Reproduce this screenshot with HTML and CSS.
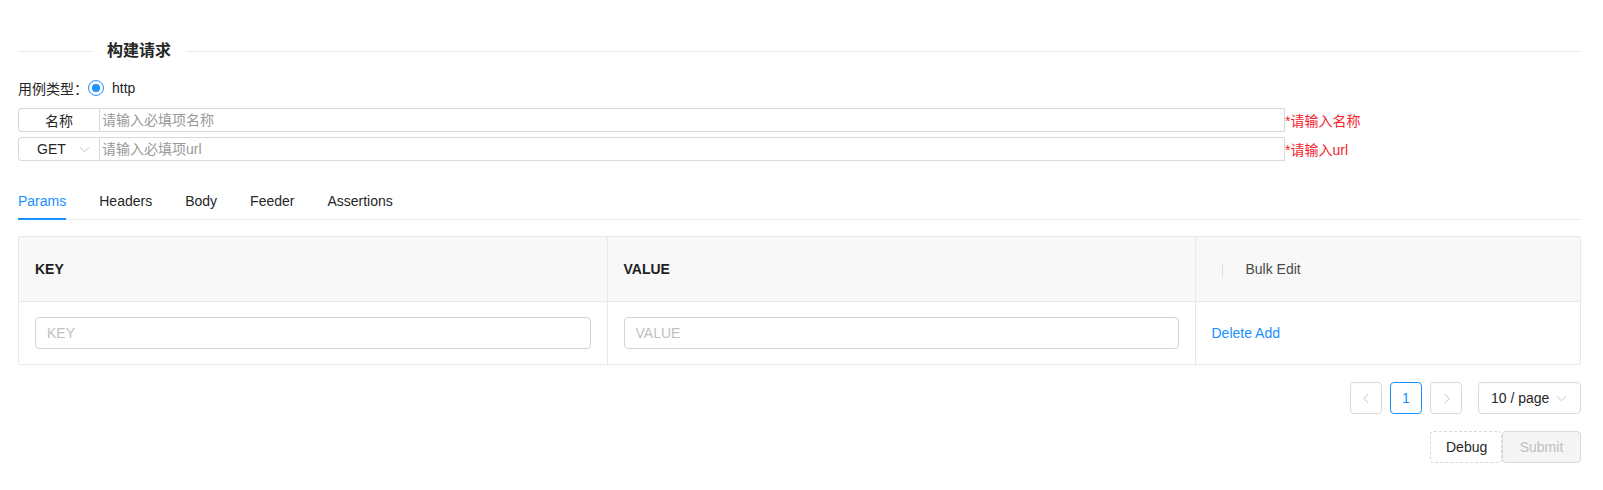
FILE: index.html
```html
<!DOCTYPE html>
<html lang="zh-CN">
<head>
    <meta charset="UTF-8">
    <title>构建请求</title>
    <link rel="stylesheet" href="styles.css">
</head>
<body>
    <div class="page">
        <div class="divider"><span class="divider-text">构建请求</span></div>

        <div class="type-row">
            <span class="type-label">用例类型：</span>
            <label class="radio"><span class="radio-dot"></span><span class="radio-text">http</span></label>
        </div>

        <div class="field-row">
            <div class="input-group">
                <span class="addon">名称</span>
                <input class="group-input" type="text" placeholder="请输入必填项名称">
            </div>
            <span class="error">*请输入名称</span>
        </div>
        <div class="field-row">
            <div class="input-group">
                <span class="addon addon-select">GET
                    <svg class="chev" viewBox="0 0 12 12" width="11" height="11"><path d="M1 3.5 L6 8.5 L11 3.5" fill="none" stroke="#bfbfbf" stroke-width="1"/></svg>
                </span>
                <input class="group-input" type="text" placeholder="请输入必填项url">
            </div>
            <span class="error">*请输入url</span>
        </div>

        <div class="tabs">
            <div class="tab active">Params</div>
            <div class="tab">Headers</div>
            <div class="tab">Body</div>
            <div class="tab">Feeder</div>
            <div class="tab">Assertions</div>
        </div>

        <div class="table-wrap">
            <table class="params">
                <thead>
                    <tr>
                        <th>KEY</th>
                        <th>VALUE</th>
                        <th class="op-head"><span class="sep"></span><span class="bulk">Bulk Edit</span></th>
                    </tr>
                </thead>
                <tbody>
                    <tr>
                        <td><input class="cell-input" type="text" placeholder="KEY"></td>
                        <td><input class="cell-input" type="text" placeholder="VALUE"></td>
                        <td><a class="link">Delete</a> <a class="link">Add</a></td>
                    </tr>
                </tbody>
            </table>
        </div>

        <div class="pagination">
            <span class="page-item disabled">
                <svg viewBox="0 0 12 12" width="11" height="11"><path d="M8 1 L3 6 L8 11" fill="none" stroke="#bfbfbf" stroke-width="1"/></svg>
            </span>
            <span class="page-item current">1</span>
            <span class="page-item disabled">
                <svg viewBox="0 0 12 12" width="11" height="11"><path d="M4 1 L9 6 L4 11" fill="none" stroke="#bfbfbf" stroke-width="1"/></svg>
            </span>
            <span class="size-select">10 / page
                <svg class="chev" viewBox="0 0 12 12" width="11" height="11"><path d="M1 3.5 L6 8.5 L11 3.5" fill="none" stroke="#bfbfbf" stroke-width="1"/></svg>
            </span>
        </div>

        <div class="actions">
            <button class="btn btn-dashed">Debug</button>
            <button class="btn btn-disabled" disabled>Submit</button>
        </div>
    </div>
</body>
</html>
```

FILE: styles.css
```css
*{
    box-sizing: border-box;
}
body{
    margin: 0;
    background: #fff;
    font-family: "Liberation Sans", "Noto Sans CJK SC", sans-serif;
    font-size: 14px;
    color: #262626;
}
.page{
    width: 1563px;
    margin-left: 18px;
    padding-top: 39px;
}
/* 标题分割线 */
.divider{
    display: flex;
    align-items: center;
    height: 24px;
}
.divider::before{
    content: "";
    width: 74px;
    border-top: 1px solid #ebebeb;
}
.divider::after{
    content: "";
    flex: 1;
    border-top: 1px solid #ebebeb;
}
.divider-text{
    padding: 0 15px;
    font-size: 16px;
    font-weight: bold;
    line-height: 24px;
}
/* 用例类型 */
.type-row{
    display: flex;
    align-items: center;
    height: 22px;
    margin-top: 14px;
}
.type-label{
    color: #262626;
}
.radio{
    display: flex;
    align-items: center;
}
.radio-dot{
    position: relative;
    width: 16px;
    height: 16px;
    border: 1px solid #1890ff;
    border-radius: 50%;
}
.radio-dot::after{
    content: "";
    position: absolute;
    top: 3px;
    left: 3px;
    width: 8px;
    height: 8px;
    border-radius: 50%;
    background: #1890ff;
}
.radio-text{
    padding-left: 8px;
}
/* 输入框 */
.field-row{
    display: flex;
    align-items: center;
    margin-top: 9px;
}
.field-row + .field-row{
    margin-top: 5px;
}
.input-group{
    display: flex;
    width: 1267px;
    height: 24px;
}
.addon{
    display: flex;
    align-items: center;
    justify-content: center;
    width: 81px;
    border: 1px solid #d9d9d9;
    border-right: 0;
    border-radius: 4px 0 0 4px;
    background: #fff;
    color: #262626;
}
.addon-select{
    justify-content: flex-start;
    padding-left: 18px;
}
.addon-select .chev{
    margin-left: 13px;
}
.group-input{
    flex: 1;
    height: 24px;
    padding: 0 2px;
    border: 1px solid #d9d9d9;
    border-radius: 0;
    font: inherit;
    color: #262626;
    outline: none;
}
.group-input::placeholder{
    color: #9a9a9a;
}
.error{
    color: #f5222d;
    font-size: 14px;
}
/* 标签页 */
.tabs{
    display: flex;
    margin-top: 21px;
    border-bottom: 1px solid #ebebeb;
}
.tab{
    margin-right: 33px;
    padding: 10px 0 7px;
    line-height: 19px;
    border-bottom: 2px solid transparent;
    margin-bottom: -1px;
    color: #262626;
}
.tab.active{
    color: #1890ff;
    border-bottom-color: #1890ff;
}
/* 参数表 */
.table-wrap{
    margin-top: 16px;
    border: 1px solid #e8e8e8;
    border-radius: 2px;
}
.params{
    width: 100%;
    border-collapse: collapse;
    table-layout: fixed;
}
.params th{
    height: 64px;
    padding: 0 16px;
    background: #f8f8f8;
    text-align: left;
    font-weight: bold;
    color: #1f1f1f;
    border-bottom: 1px solid #e8e8e8;
}
.params th:nth-child(1),
.params th:nth-child(2){
    width: 588px;
}
.params th + th,
.params td + td{
    border-left: 1px solid #e8e8e8;
}
.params .op-head{
    font-weight: normal;
    padding-left: 26px;
}
.sep{
    display: inline-block;
    width: 1px;
    height: 13px;
    background: #e0e0e0;
    vertical-align: middle;
}
.bulk{
    margin-left: 23px;
    color: #4a4a4a;
}
.params td{
    height: 63px;
    padding: 0 16px;
}
.cell-input{
    width: 100%;
    height: 32px;
    padding: 0 11px;
    border: 1px solid #d4d4d4;
    border-radius: 4px;
    font: inherit;
    outline: none;
}
.cell-input::placeholder{
    color: #bfbfbf;
}
.link{
    color: #1890ff;
    cursor: pointer;
}
/* 分页 */
.pagination{
    display: flex;
    justify-content: flex-end;
    align-items: center;
    margin-top: 17px;
}
.page-item{
    display: flex;
    align-items: center;
    justify-content: center;
    width: 32px;
    height: 32px;
    margin-left: 8px;
    border: 1px solid #d9d9d9;
    border-radius: 4px;
    color: #262626;
}
.page-item.current{
    border-color: #1890ff;
    color: #1890ff;
}
.size-select{
    display: flex;
    align-items: center;
    width: 103px;
    height: 32px;
    margin-left: 16px;
    padding-left: 12px;
    border: 1px solid #d9d9d9;
    border-radius: 4px;
    color: #262626;
}
.size-select .chev{
    margin-left: 7px;
}
/* 操作按钮 */
.actions{
    display: flex;
    justify-content: flex-end;
    margin-top: 17px;
}
.btn{
    height: 32px;
    padding: 0 15px;
    font: inherit;
    border-radius: 4px;
    background: #fff;
    color: #262626;
}
.btn-dashed{
    width: 72px;
    border: 1px dashed #d9d9d9;
}
.btn-disabled{
    width: 79px;
    border: 1px solid #d9d9d9;
    background: #f5f5f5;
    color: #bfbfbf;
}
```
